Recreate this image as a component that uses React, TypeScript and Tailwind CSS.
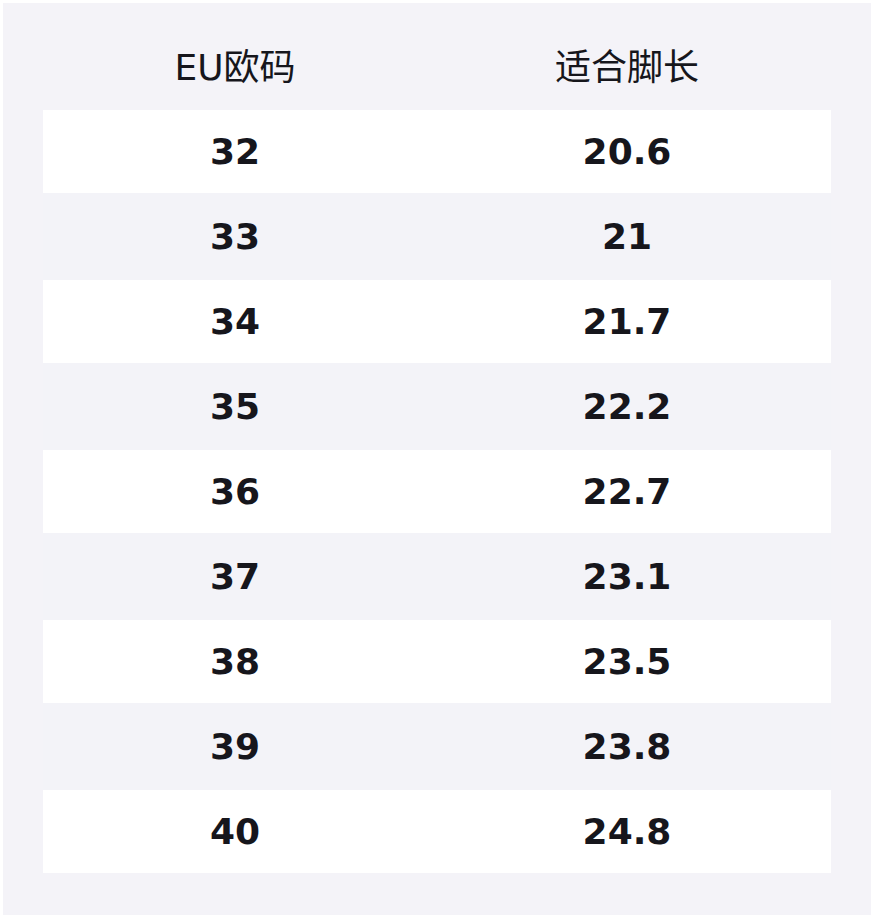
import React from 'react';

const sizes: [string, string][] = [
  ['32', '20.6'],
  ['33', '21'],
  ['34', '21.7'],
  ['35', '22.2'],
  ['36', '22.7'],
  ['37', '23.1'],
  ['38', '23.5'],
  ['39', '23.8'],
  ['40', '24.8'],
];

const App: React.FC = () => {
  return (
    <div className="bg-white w-[874px] h-[918px] p-[3px] font-['DejaVu_Sans','Noto_Sans_CJK_SC',sans-serif] text-[#16161c]">
      <div className="bg-[#f4f3f8] w-[868px] h-[912px] pt-[40px] px-[40px]">
        {/* header */}
        <div className="grid grid-cols-[384px_400px] h-[67px] pb-[18px] items-center text-[36px] leading-none">
          <div className="text-center">EU欧码</div>
          <div className="text-center">适合脚长</div>
        </div>
        {/* rows */}
        {sizes.map(([eu, foot], i) => (
          <div
            key={eu}
            className={
              i % 2 === 0
                ? 'grid grid-cols-[384px_400px] items-center h-[83px] bg-white text-[36px] font-bold leading-none'
                : 'grid grid-cols-[384px_400px] items-center h-[87px] bg-[#f3f3f8] text-[36px] font-bold leading-none'
            }
          >
            <div className="text-center">{eu}</div>
            <div className="text-center">{foot}</div>
          </div>
        ))}
      </div>
    </div>
  );
};

export default App;
